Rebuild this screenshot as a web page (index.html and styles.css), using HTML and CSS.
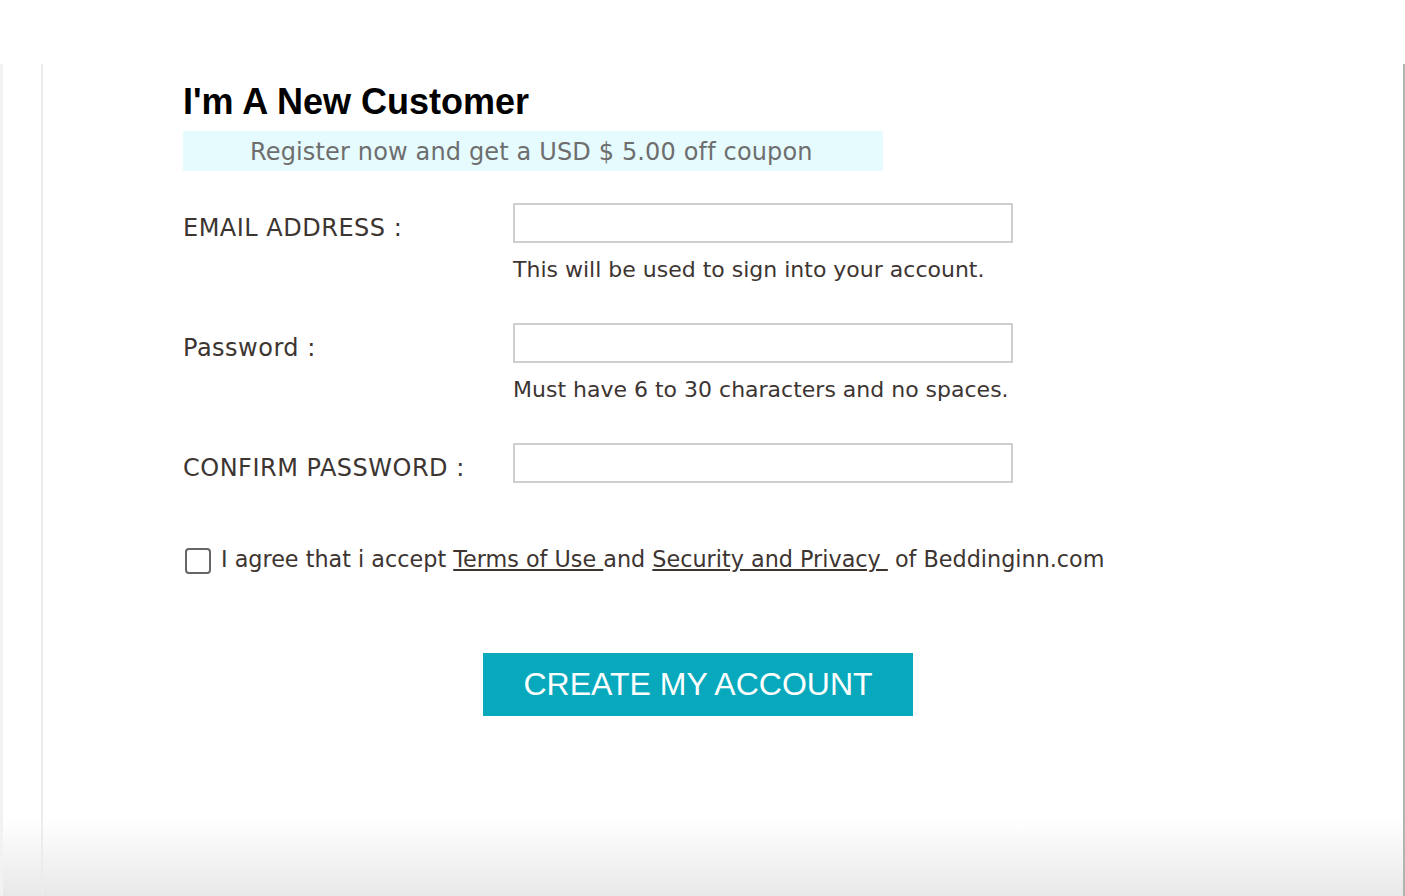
FILE: index.html
```html
<!DOCTYPE html>
<html>
<head>
<meta charset="utf-8">
<link rel="stylesheet" href="styles.css">
</head>
<body>
<div class="page">
  <div class="panel">
    <h2 class="title">I'm A New Customer</h2>
    <div class="coupon">Register now and get a USD $ 5.00 off coupon</div>
    <div class="form">
      <div class="row">
        <label class="label">EMAIL ADDRESS :</label>
        <div class="field">
          <input class="input" type="text">
          <div class="help">This will be used to sign into your account.</div>
        </div>
      </div>
      <div class="row">
        <label class="label">Password :</label>
        <div class="field">
          <input class="input" type="password">
          <div class="help">Must have 6 to 30 characters and no spaces.</div>
        </div>
      </div>
      <div class="row">
        <label class="label">CONFIRM PASSWORD :</label>
        <div class="field">
          <input class="input" type="password">
        </div>
      </div>
    </div>
    <div class="agree">
      <span class="box"></span>
      <span class="agree-text">I agree that i accept <a href="#">Terms of Use </a>and <a href="#">Security and Privacy&nbsp;</a> of Beddinginn.com</span>
    </div>
    <div class="actions">
      <button class="btn">CREATE MY ACCOUNT</button>
    </div>
  </div>
</div>
</body>
</html>
```

FILE: styles.css
```css
html, body {
  margin: 0;
  padding: 0;
  background: #fff;
}
body {
  font-family: "DejaVu Sans", Verdana, sans-serif;
  color: #3d3532;
}
.page {
  margin-top: 64px;
  height: 832px;
  border-left: 3px solid #f2f2f2;
  background: linear-gradient(to bottom, #fff 0, #fff 755px, #e8e8e8 832px);
  box-sizing: border-box;
}
.panel {
  margin-left: 38px;
  height: 100%;
  border-left: 2px solid #ececec;
  border-right: 2px solid #b3b3b3;
  box-sizing: border-box;
  padding: 14px 0 0 140px;
}
.title {
  margin: 0;
  font-family: "Liberation Sans", Arial, sans-serif;
  font-weight: bold;
  font-size: 36px;
  line-height: 48px;
  color: #000;
}
.coupon {
  margin-top: 5px;
  width: 700px;
  height: 40px;
  box-sizing: border-box;
  padding-left: 67px;
  background: #e6fbfe;
  color: #6e6e6e;
  font-size: 24px;
  letter-spacing: 0.15px;
  line-height: 42px;
  white-space: nowrap;
}
.form {
  margin-top: 32px;
  display: flex;
  flex-direction: column;
}
.row {
  display: flex;
  height: 120px;
}
.label {
  width: 330px;
  flex: none;
  font-size: 24px;
  letter-spacing: 0.5px;
  line-height: 51px;
  white-space: nowrap;
}
.field {
  display: flex;
  flex-direction: column;
}
.input {
  width: 500px;
  height: 40px;
  box-sizing: border-box;
  border: 2px solid #cfcfcf;
  margin: 0;
  padding: 0 8px;
  background: #fff;
  outline: none;
}
.help {
  margin-top: 13px;
  font-size: 22px;
  line-height: 28px;
}
.agree {
  margin-top: -19px;
  display: flex;
  align-items: center;
  gap: 10px;
  font-size: 22.3px;
}
.box {
  margin-left: 2px;
  width: 26px;
  height: 26px;
  flex: none;
  box-sizing: border-box;
  border: 2px solid #666;
  border-radius: 4px;
  margin-top: 4px;
}
.agree a {
  color: #3d3532;
  text-decoration: underline;
}
.actions {
  margin-top: 79px;
  padding-left: 300px;
}
.btn {
  width: 430px;
  height: 63px;
  border: none;
  margin: 0;
  background: #08a9bc;
  color: #fff;
  font-family: "Liberation Sans", Arial, sans-serif;
  font-size: 32px;
  padding: 0;
}
```
